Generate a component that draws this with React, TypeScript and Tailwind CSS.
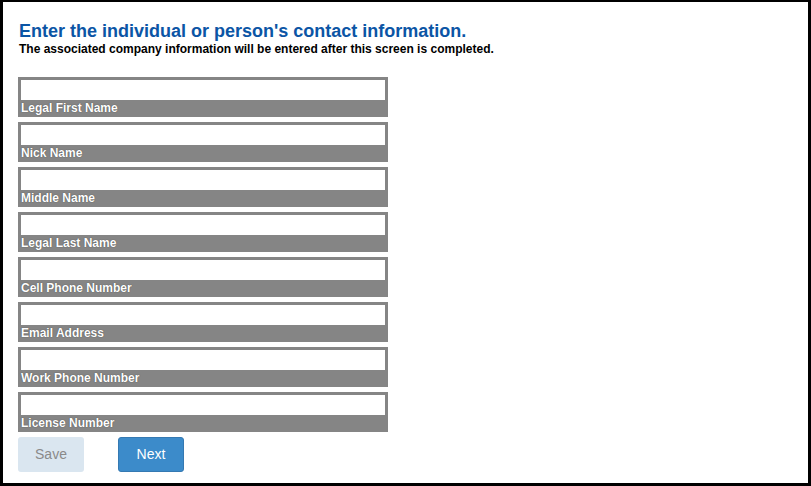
import React from "react";

const fields = [
  "Legal First Name",
  "Nick Name",
  "Middle Name",
  "Legal Last Name",
  "Cell Phone Number",
  "Email Address",
  "Work Phone Number",
  "License Number",
];

export default function App() {
  return (
    <div
      className="w-[811px] h-[486px] border-black border-t-2 border-l-[3px] border-r-[3px] border-b-[3px] bg-white pl-[15px] pt-[19px]"
      style={{ fontFamily: '"Liberation Sans", Arial, sans-serif' }}
    >
      <h1 className="text-[18px] leading-[21px] font-bold text-[#0b55a5] pl-px">
        Enter the individual or person's contact information.
      </h1>
      <p className="text-[12px] leading-[14px] font-bold text-black pl-px">
        The associated company information will be entered after this screen is completed.
      </p>
      <div className="mt-[21px] flex flex-col gap-[5px]">
        {fields.map((f) => (
          <div key={f} className="w-[370px] h-[40px] bg-[#858585] pt-[3px] px-[3px] flex flex-col">
            <input className="w-[364px] h-[20px] bg-white outline-none" />
            <div className="text-[12px] leading-[17px] font-bold text-white [text-shadow:0_0_1px_#3a3a3a]">
              {f}
            </div>
          </div>
        ))}
      </div>
      <div className="mt-[5px] flex gap-[34px]">
        <button className="w-[66px] h-[35px] rounded-[3px] bg-[#dae6f0] text-[#8a8a8a] text-[14px]">
          Save
        </button>
        <button className="w-[66px] h-[35px] rounded-[3px] bg-[#3c8bca] border border-[#3579b2] text-white text-[14px]">
          Next
        </button>
      </div>
    </div>
  );
}
